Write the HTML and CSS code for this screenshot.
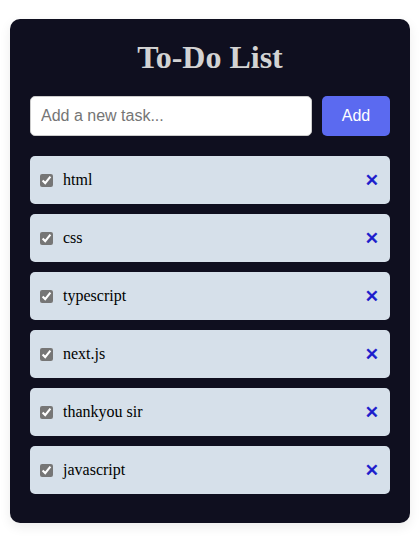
FILE: index.html
```html
<!DOCTYPE html>
<html>
<head>
<meta charset="utf-8">
<link rel="stylesheet" href="styles.css">
</head>
<body>
<div class="card">
  <h1 class="title">To-Do List</h1>
  <div class="add-row">
    <input class="task-input" type="text" placeholder="Add a new task...">
    <button class="add-btn">Add</button>
  </div>
  <ul class="list">
    <li class="item"><input type="checkbox" class="check" checked><span class="label">html</span><button class="remove">✕</button></li>
    <li class="item"><input type="checkbox" class="check" checked><span class="label">css</span><button class="remove">✕</button></li>
    <li class="item"><input type="checkbox" class="check" checked><span class="label">typescript</span><button class="remove">✕</button></li>
    <li class="item"><input type="checkbox" class="check" checked><span class="label">next.js</span><button class="remove">✕</button></li>
    <li class="item"><input type="checkbox" class="check" checked><span class="label">thankyou sir</span><button class="remove">✕</button></li>
    <li class="item"><input type="checkbox" class="check" checked><span class="label">javascript</span><button class="remove">✕</button></li>
  </ul>
</div>
</body>
</html>
```
FILE: styles.css
```css
html, body {
  margin: 0;
  background: #ffffff;
}
body {
  padding: 19px 10px;
  font-family: "Liberation Serif", "Times New Roman", serif;
}
.card {
  width: 400px;
  box-sizing: border-box;
  background: #0f0f1f;
  border-radius: 10px;
  padding: 20px 20px 29px;
  box-shadow: 0 4px 12px rgba(0, 0, 0, 0.08);
}
.title {
  margin: 0 0 20px;
  text-align: center;
  font-size: 32px;
  line-height: 37px;
  font-weight: bold;
  color: #d3d3d3;
}
.add-row {
  display: flex;
  gap: 10px;
  margin-bottom: 20px;
}
.task-input {
  flex: 1;
  height: 40px;
  box-sizing: border-box;
  border: 1px solid #cccccc;
  border-radius: 5px;
  padding: 0 10px;
  font-family: "Liberation Sans", Arial, sans-serif;
  font-size: 16px;
  background: #ffffff;
  outline: none;
}
.task-input::placeholder {
  color: #757575;
}
.add-btn {
  width: 68px;
  height: 40px;
  border: none;
  border-radius: 5px;
  background: #5b6af0;
  color: #ffffff;
  font-family: "Liberation Sans", Arial, sans-serif;
  font-size: 16px;
  cursor: pointer;
}
.list {
  list-style: none;
  margin: 0;
  padding: 0;
  display: flex;
  flex-direction: column;
  gap: 10px;
}
.item {
  display: flex;
  align-items: center;
  height: 48px;
  box-sizing: border-box;
  padding: 0 8px 0 10px;
  background: #d6e0ea;
  border-radius: 5px;
}
.check {
  margin: 0 10px 0 0;
  width: 13px;
  height: 13px;
  accent-color: #767676;
}
.label {
  flex: 1;
  font-size: 16px;
  color: #000000;
}
.remove {
  border: none;
  background: none;
  color: #1a1acc;
  font-family: "DejaVu Sans", sans-serif;
  font-weight: bold;
  font-size: 17px;
  line-height: 20px;
  padding: 0 3px;
  -webkit-text-stroke: 0.6px #1a1acc;
  cursor: pointer;
}
```
